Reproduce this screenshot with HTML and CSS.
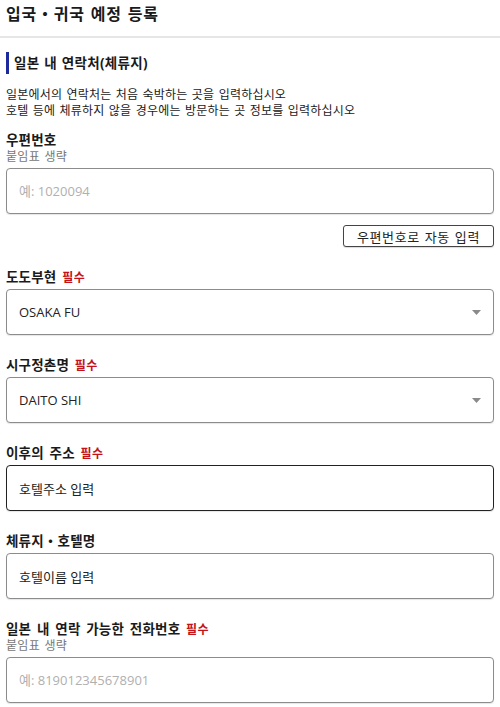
FILE: index.html
```html
<!DOCTYPE html>
<html lang="ko">
<head>
    <meta charset="UTF-8">
    <meta name="viewport" content="width=device-width, initial-scale=1.0">
    <title>입국・귀국 예정 등록</title>
    <link rel="stylesheet" href="styles.css">
</head>
<body>
    <div class="header">
        <h1>입국・귀국 예정 등록</h1>
    </div>

    <div class="container">
        <h2 class="section-title">일본 내 연락처(체류지)</h2>
        <p class="desc">
            일본에서의 연락처는 처음 숙박하는 곳을 입력하십시오<br>
            호텔 등에 체류하지 않을 경우에는 방문하는 곳 정보를 입력하십시오
        </p>

        <div class="field">
            <label class="label">우편번호</label>
            <div class="note">붙임표 생략</div>
            <input class="input" type="text" placeholder="예: 1020094">
            <div class="btn-row">
                <button class="btn">우편번호로 자동 입력</button>
            </div>
        </div>

        <div class="field">
            <label class="label">도도부현 <span class="req">필수</span></label>
            <div class="select">
                <span>OSAKA FU</span>
                <svg width="9" height="5" viewBox="0 0 9 5"><path d="M0 0h9L4.5 5z" fill="#8a8a8a"/></svg>
            </div>
        </div>

        <div class="field">
            <label class="label">시구정촌명 <span class="req">필수</span></label>
            <div class="select">
                <span>DAITO SHI</span>
                <svg width="9" height="5" viewBox="0 0 9 5"><path d="M0 0h9L4.5 5z" fill="#8a8a8a"/></svg>
            </div>
        </div>

        <div class="field">
            <label class="label">이후의 주소 <span class="req">필수</span></label>
            <input class="input focused" type="text" value="호텔주소 입력">
        </div>

        <div class="field">
            <label class="label">체류지・호텔명</label>
            <input class="input" type="text" value="호텔이름 입력">
        </div>

        <div class="field">
            <label class="label">일본 내 연락 가능한 전화번호 <span class="req">필수</span></label>
            <div class="note">붙임표 생략</div>
            <input class="input" type="text" placeholder="예: 819012345678901">
        </div>
    </div>
</body>
</html>
```

FILE: styles.css
```css
:root {
    --text: #1a1a1a;
    --muted: #777777;
    --border: #8c8c8c;
    --accent: #1c2a9c;
    --required: #c4121a;
}

body {
    font-family: "Open Sans", "Noto Sans CJK KR", sans-serif;
    color: var(--text);
    background-color: #ffffff;
    margin: 0;
}

.header {
    height: 36px;
    border-bottom: 2px solid #e6e6e6;
    padding: 0 6px;
}

.header h1 {
    margin: 0;
    font-size: 16px;
    font-weight: bold;
    line-height: 29px;
    letter-spacing: 0.8px;
    word-spacing: 1px;
}

.container {
    padding: 0 6px;
}

.section-title {
    margin: 14px 0 0;
    font-size: 13.5px;
    font-weight: bold;
    line-height: 22px;
    letter-spacing: 0.3px;
    word-spacing: 1px;
    border-left: 3px solid var(--accent);
    padding-left: 5px;
}

.desc {
    margin: 13px 0 12px;
    font-size: 12px;
    line-height: 16px;
    letter-spacing: 0.2px;
    word-spacing: 1px;
}

.field {
    display: flex;
    flex-direction: column;
    margin-bottom: 21px;
}

.label {
    height: 18px;
    font-size: 13.5px;
    font-weight: bold;
    line-height: 18px;
    margin-bottom: 3px;
    letter-spacing: 0.2px;
    word-spacing: 2px;
}

.req {
    color: var(--required);
    font-size: 12px;
    line-height: 1;
    letter-spacing: 0.5px;
}

.note {
    font-size: 12px;
    line-height: 16px;
    color: var(--muted);
    margin-top: -3px;
    margin-bottom: 3px;
    letter-spacing: 0.3px;
    word-spacing: 1px;
}

.input,
.select {
    box-sizing: border-box;
    width: 100%;
    height: 46px;
    border: 1px solid var(--border);
    border-radius: 4px;
    padding: 0 12px;
    font-family: inherit;
    font-size: 13px;
    color: #222222;
    background-color: #ffffff;
    box-shadow: 0 1px 1px rgba(0, 0, 0, 0.1);
    outline: none;
}

.input::placeholder {
    color: #b0b0b0;
}

.input.focused {
    border-color: #222222;
}

.select {
    display: flex;
    align-items: center;
    justify-content: space-between;
}

.btn-row {
    display: flex;
    justify-content: flex-end;
    margin-top: 11px;
}

.btn {
    height: 22px;
    padding: 0 13px;
    font-family: inherit;
    font-size: 13px;
    letter-spacing: 0.6px;
    word-spacing: 1px;
    color: #222222;
    background-color: #ffffff;
    border: 1px solid #444444;
    border-radius: 3px;
    box-shadow: 0 1px 1px rgba(0, 0, 0, 0.15);
    cursor: pointer;
}
```
